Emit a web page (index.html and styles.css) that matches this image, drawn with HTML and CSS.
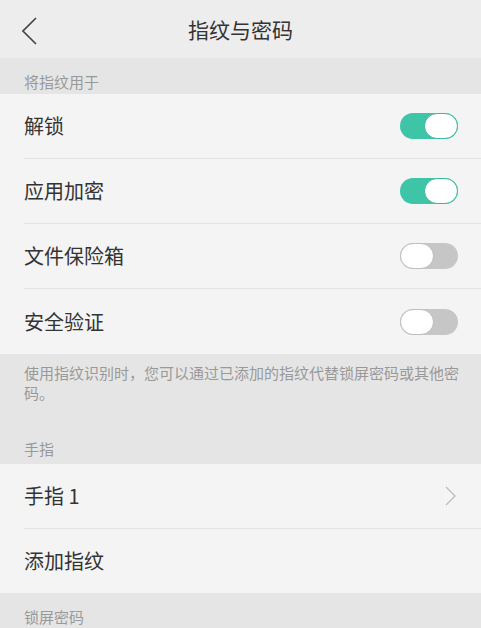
FILE: index.html
```html
<!DOCTYPE html>
<html lang="zh-CN">
<head>
<meta charset="utf-8">
<link rel="stylesheet" href="styles.css">
</head>
<body>
<div class="page">
  <header class="topbar">
    <svg class="back" width="16" height="28" viewBox="0 0 16 28"><polyline points="14,1 1,14 14,27" fill="none" stroke="#444" stroke-width="1.6"/></svg>
    <div class="title">指纹与密码</div>
  </header>

  <div class="section-label">将指纹用于</div>
  <div class="group">
    <div class="row"><span class="row-text">解锁</span><span class="switch on"><span class="knob"></span></span></div>
    <div class="row"><span class="row-text">应用加密</span><span class="switch on"><span class="knob"></span></span></div>
    <div class="row"><span class="row-text">文件保险箱</span><span class="switch off"><span class="knob"></span></span></div>
    <div class="row"><span class="row-text">安全验证</span><span class="switch off"><span class="knob"></span></span></div>
  </div>

  <div class="info">
    <p class="info-text">使用指纹识别时，您可以通过已添加的指纹代替锁屏密码或其他密码。</p>
    <div class="info-label">手指</div>
  </div>
  <div class="group">
    <div class="row"><span class="row-text">手指 1</span><svg class="chev" width="12" height="20" viewBox="0 0 12 20"><polyline points="1,1 10,10 1,19" fill="none" stroke="#bdbdbd" stroke-width="1.3"/></svg></div>
    <div class="row"><span class="row-text">添加指纹</span></div>
  </div>
  <div class="section-label">锁屏密码</div>
</div>
</body>
</html>
```

FILE: styles.css
```css
* { box-sizing: border-box; }
html, body { margin: 0; padding: 0; }
body {
  background: #f4f4f4;
  font-family: "Noto Sans CJK SC", "Noto Sans", sans-serif;
  color: #333;
}
.page { width: 481px; overflow: hidden; }
.topbar {
  height: 58px;
  background: #ededed;
  position: relative;
  display: flex;
  align-items: center;
  justify-content: center;
}
.back { position: absolute; left: 22px; top: 17px; }
.title { font-size: 21px; color: #333; line-height: 1; margin-top: 1px; }
.section-label {
  height: 36px;
  background: #e5e5e5;
  padding: 0 24px 3px;
  display: flex;
  align-items: flex-end;
  font-size: 15px;
  line-height: 18px;
  color: #999;
}
.group { background: #f4f4f4; }
.row {
  height: 65px;
  margin-left: 24px;
  padding-right: 23px;
  display: flex;
  align-items: center;
  justify-content: space-between;
  border-bottom: 1px solid #e3e3e3;
}
.row:last-child { border-bottom: none; height: 64px; }
.group:nth-of-type(2) .row:last-child { height: 65px; }
.row-text { font-size: 20px; line-height: 1; color: #333; }
.switch {
  width: 58px;
  height: 26px;
  border-radius: 13px;
  display: flex;
  align-items: center;
}
.switch .knob {
  width: 34px;
  height: 26px;
  border-radius: 13px;
  background: #fff;
}
.switch.on { background: #3ec5a8; justify-content: flex-end; }
.switch.on .knob { border: 1.5px solid #3bb89d; }
.switch.off { background: #c6c6c6; justify-content: flex-start; }
.switch.off .knob { border: 1.5px solid #bdbdbd; }
.chev { margin-right: 1px; }
.info {
  background: #e5e5e5;
  height: 110px;
  padding: 9px 18px 6px 24px;
  display: flex;
  flex-direction: column;
  justify-content: space-between;
  color: #999;
}
.info-text { margin: 0; font-size: 15px; line-height: 20px; }
.info-label { font-size: 15px; line-height: 18px; }
```
